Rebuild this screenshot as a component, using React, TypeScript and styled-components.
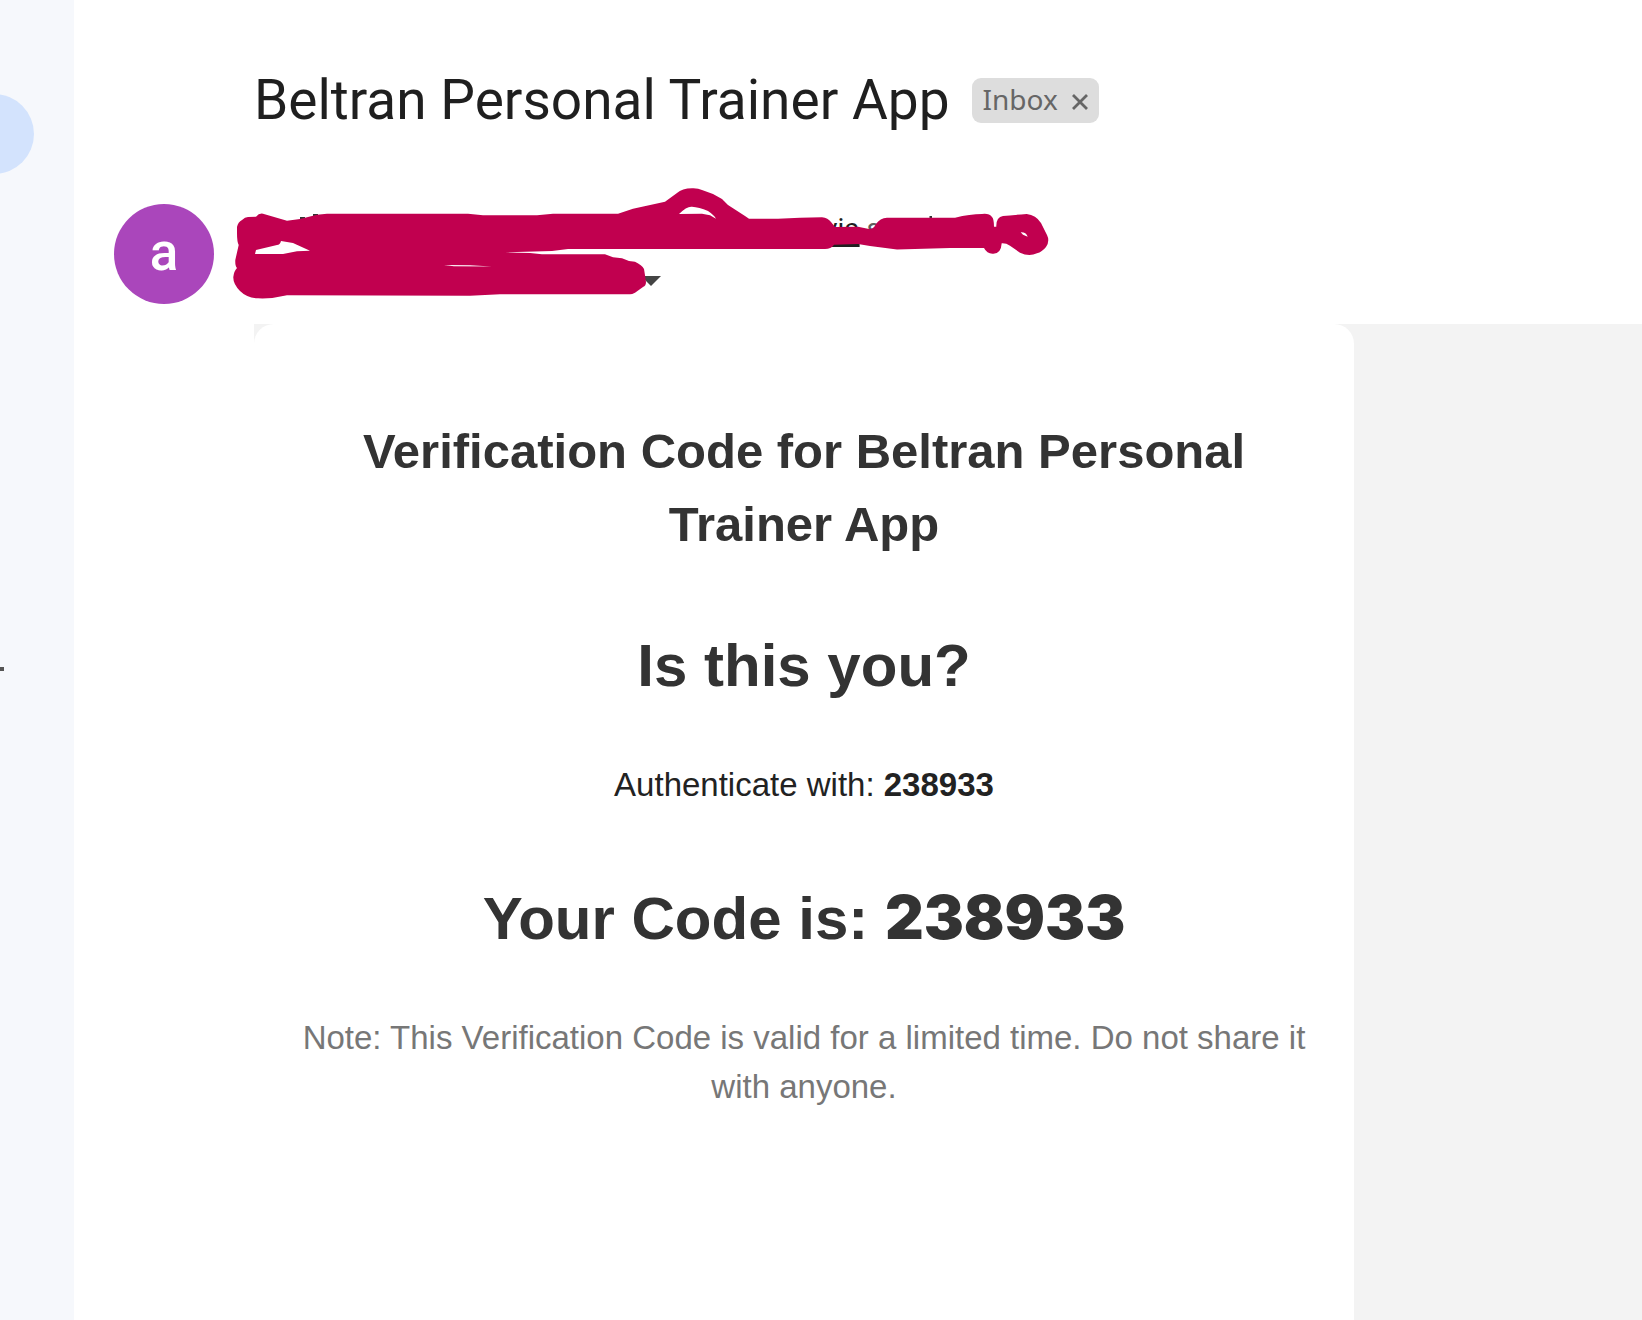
import React from "react";
import styled, { createGlobalStyle } from "styled-components";

const GlobalStyle = createGlobalStyle`
  * { box-sizing: border-box; }
  body { margin: 0; background: #fff; color: #1f1f1f; }
  h1, h2, h3, p { margin: 0; }
`;

const Page = styled.div`
  display: flex;
  min-height: 100vh;
  overflow: hidden;
`;

const Rail = styled.nav`
  flex: 0 0 74px;
  display: flex;
  flex-direction: column;
  align-items: flex-start;
  gap: 493px;
  padding-top: 94px;
  background: #f6f8fc;
`;

const ActiveItem = styled.button`
  width: 80px;
  height: 80px;
  margin-left: -46px;
  padding: 0;
  border: 0;
  border-radius: 40px;
  background: #d3e3fd;
`;

const RailMark = styled.span`
  width: 4px;
  height: 4px;
  background: #555;
`;

const Mail = styled.main`
  flex: 1;
  min-width: 0;
  display: grid;
  grid-template-columns: 100px minmax(0, 1fr);
  grid-template-rows: auto auto 1fr;
  column-gap: 40px;
  padding: 68px 0 0 40px;
`;

const SubjectRow = styled.header`
  grid-column: 2;
  display: flex;
  align-items: center;
  gap: 22px;
  margin-bottom: 72px;
`;

const Subject = styled.h1`
  font: 400 55px/64px Roboto, sans-serif;
`;

const Label = styled.span`
  display: flex;
  align-items: center;
  gap: 14px;
  height: 45px;
  padding: 0 11px;
  border-radius: 9px;
  background: #ddd;
  color: #666;
  font: 400 28px/42px "Noto Sans", sans-serif;
`;

const LabelName = styled.span`
  padding-bottom: 3px;
`;

const RemoveLabel = styled.button`
  display: flex;
  padding: 4px 0 0;
  border: 0;
  background: none;
  color: inherit;
`;

const Avatar = styled.div`
  grid-column: 1;
  height: 100px;
  border-radius: 50%;
  background: #aa46bb;
  color: #fff;
  font: 500 53px/96px Roboto, sans-serif;
  text-align: center;
`;

const Sender = styled.div`
  position: relative;
  display: flex;
  flex-direction: column;
  gap: 2px;
  height: 120px;
`;

const SenderLine = styled.div<{ $hidden: number }>`
  display: flex;
  align-items: center;
  gap: 7px;
  height: 50px;
  padding-left: ${(p) => p.$hidden}px;
  color: #5e5e5e;
  font: 400 28px/50px Roboto, sans-serif;
`;

const Via = styled.a`
  color: #1f1f1f;
  text-decoration: underline;
  text-decoration-thickness: 3px;
  text-underline-offset: 6px;
`;

const DetailsButton = styled.button`
  display: flex;
  padding: 0;
  border: 0;
  background: none;
`;

const Marker = styled.svg`
  position: absolute;
  left: -24px;
  top: -19px;
`;

const Body = styled.section`
  grid-column: 2;
  display: flex;
  background: #f3f3f3;
`;

const Card = styled.article`
  flex: 0 1 1100px;
  display: flex;
  flex-direction: column;
  padding: 91px 40px;
  border-radius: 20px 20px 0 0;
  background: #fff;
  font-family: "Liberation Sans", Arial, sans-serif;
  text-align: center;
`;

const CardTitle = styled.h2`
  margin-bottom: 60px;
  color: #333;
  font-size: 49px;
  line-height: 73px;
`;

const Headline = styled.h3`
  margin-bottom: 49px;
  color: #333;
  font-size: 60px;
  line-height: 90px;
`;

const BlackCode = styled.strong`
  font-family: Inter, "Liberation Sans", sans-serif;
  font-weight: 900;
`;

const Text = styled.p<{ $muted?: boolean }>`
  margin-bottom: ${(p) => (p.$muted ? 0 : 63)}px;
  color: ${(p) => (p.$muted ? "#777" : "#222")};
  font-size: 33px;
  line-height: 49px;
`;

const outline =
  "M237 233L237 227Q238 222 242 220Q245 217 248 217L256 216.7Q259 213 263 213.7L287 220.7L300 219L317 214.7L327 213.7H468L483 215.3H537L553 213.7H618L633 208.7L665 201.7L677 193Q682 188.3 692 188.3Q698 188 702 190L713 194L722 199L728 205L745 216L749 218.7H778L800 217.7L822 217.3Q828 218 831 222L835 227L858 226.7L869 229Q874 229 876 224Q880 218 887 217.7H955Q970 214 982 214Q989 213 992 217Q994 219 994 226.7H996.3Q996 217 1003 216Q1012 215 1026.7 214Q1036 215 1041 223L1047 235Q1050 241 1046 247Q1042 252 1037 253.3Q1029 257 1020 252.7L1010 245.7Q1006 243 1001.7 243.3Q1001 254 993 253.7Q987 254 984 248H950L897 249.5L870 246L858 244L834 244.7Q831 249 825 249H568L552 251L505 252.3L530 253L542 254.3H605L613 257.3L622 258.3L629 261L635 261.7Q642 265 644 269Q645 275 646 282Q646 286 643 287L635 292.7Q632 294.3 630 294.3H500L470 295.7L287 295.3Q272 299 258 298.3Q247 298 240 291Q233 284 233.3 277Q234 271 237 268Q235 266 235.3 260L238.7 245Q237 242 237 233Z";
const gaps = [
  "M256 250L255 254H283L297 251.3L310 250.7L293 243L281 241Q280 245 277 245Z",
  "M679 214Q687 206 692 206.7Q699 207 708 211Q714 215 716 218.7L710 215.3L702 213.7Z",
  "M1020.7 232.3Q1026 232 1027.7 236.7L1023 234.7Z",
  "M444 265L470 265.3L492 266.5L454 266.3Z",
].join("");

export default function App() {
  return (
    <>
      <GlobalStyle />
      <Page>
        <Rail aria-label="Mailbox">
          <ActiveItem type="button" aria-label="Inbox" />
          <RailMark />
        </Rail>
        <Mail>
          <SubjectRow>
            <Subject>Beltran Personal Trainer App</Subject>
            <Label>
              <LabelName>Inbox</LabelName>
              <RemoveLabel type="button" aria-label="Remove label">
                <svg width="16" height="16" viewBox="0 0 16 16" fill="none" stroke="currentColor" strokeWidth="2.8">
                  <path d="M1 1L15 15M15 1L1 15" />
                </svg>
              </RemoveLabel>
            </Label>
          </SubjectRow>
          <Avatar>a</Avatar>
          <Sender>
            <SenderLine $hidden={570}>
              <Via href="#via">via</Via>
              <span>s</span>
            </SenderLine>
            <SenderLine $hidden={387}>
              <DetailsButton type="button" aria-label="Show details">
                <svg width="20" height="10" viewBox="0 0 20 10" fill="#444">
                  <path d="M0 0H20L10 10Z" />
                </svg>
              </DetailsButton>
            </SenderLine>
            <Marker width="824" height="120" viewBox="230 185 824 120" aria-hidden="true">
              <path d="M300 217h5v4h-5zM313 214h5v4h-5zM929.5 216h2.5v4h-2.5z" fill="#333" />
              <path d={outline + gaps} fill="#c1004f" fillRule="evenodd" />
            </Marker>
          </Sender>
          <Body>
            <Card>
              <CardTitle>Verification Code for Beltran Personal Trainer App</CardTitle>
              <Headline>Is this you?</Headline>
              <Text>
                Authenticate with: <strong>238933</strong>
              </Text>
              <Headline>
                Your Code is: <BlackCode>238933</BlackCode>
              </Headline>
              <Text $muted>
                Note: This Verification Code is valid for a limited time. Do not share it with anyone.
              </Text>
            </Card>
          </Body>
        </Mail>
      </Page>
    </>
  );
}
